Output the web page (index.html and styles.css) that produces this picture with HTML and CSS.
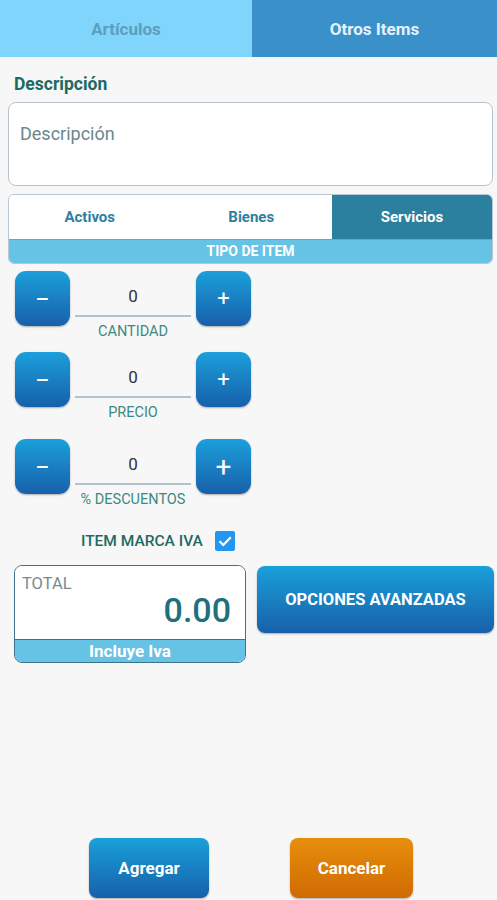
FILE: index.html
```html
<!DOCTYPE html>
<html lang="es">
<head>
    <meta charset="UTF-8">
    <meta name="viewport" content="width=device-width, initial-scale=1.0">
    <title>Otros Items</title>
    <link rel="stylesheet" href="styles.css">
</head>
<body>
    <div class="page">
        <div class="tabs">
            <div class="tab">Artículos</div>
            <div class="tab active">Otros Items</div>
        </div>

        <div class="label">Descripción</div>
        <div class="desc">Descripción</div>

        <div class="segment">
            <div class="options">
                <div class="option">Activos</div>
                <div class="option">Bienes</div>
                <div class="option selected">Servicios</div>
            </div>
            <div class="segment-title">TIPO DE ITEM</div>
        </div>

        <div class="stepper first">
            <div class="step-btn minus">&minus;</div>
            <div class="step-field">
                <div class="step-value">0</div>
                <div class="step-label">CANTIDAD</div>
            </div>
            <div class="step-btn">+</div>
        </div>

        <div class="stepper second">
            <div class="step-btn minus">&minus;</div>
            <div class="step-field">
                <div class="step-value">0</div>
                <div class="step-label">PRECIO</div>
            </div>
            <div class="step-btn">+</div>
        </div>

        <div class="stepper third">
            <div class="step-btn minus">&minus;</div>
            <div class="step-field">
                <div class="step-value">0</div>
                <div class="step-label">% DESCUENTOS</div>
            </div>
            <div class="step-btn big">+</div>
        </div>

        <div class="iva">
            <span>ITEM MARCA IVA</span>
            <span class="check">
                <svg width="20" height="20" viewBox="0 0 20 20">
                    <rect x="0" y="0" width="20" height="20" rx="2" fill="#2196f3"/>
                    <path d="M4.5 10.2 L8.3 14 L15.8 6.3" fill="none" stroke="#fff" stroke-width="2.2"/>
                </svg>
            </span>
        </div>

        <div class="summary">
            <div class="total">
                <div class="total-top">
                    <div class="total-label">TOTAL</div>
                    <div class="total-value">0.00</div>
                </div>
                <div class="total-note">Incluye Iva</div>
            </div>
            <div class="advanced">OPCIONES AVANZADAS</div>
        </div>

        <div class="footer">
            <div class="btn add">Agregar</div>
            <div class="btn cancel">Cancelar</div>
        </div>
    </div>
</body>
</html>
```

FILE: styles.css
```css
body {
    margin: 0;
    padding: 0;
    background-color: #f7f7f7;
    font-family: Roboto, "Liberation Sans", Arial, sans-serif;
}

.page {
    display: flex;
    flex-direction: column;
    height: 900px;
}

.tabs {
    display: flex;
    height: 57px;
}

.tab {
    flex: 0 0 252px;
    display: flex;
    align-items: center;
    justify-content: center;
    background-color: #80d5fd;
    color: #5d9ebd;
    font-size: 17px;
    font-weight: bold;
}

.tab.active {
    flex: 1;
    background-color: #3a90c9;
    color: #e6f2fb;
}

.label {
    margin: 17px 0 0 14px;
    height: 20px;
    line-height: 20px;
    color: #1b6b61;
    font-size: 17.5px;
    font-weight: bold;
}

.desc {
    margin: 8px 4px 0 8px;
    height: 84px;
    border: 1px solid #b9c3cb;
    border-radius: 8px;
    background-color: #fff;
    padding: 21px 0 0 11px;
    box-sizing: border-box;
    color: #6c878b;
    font-size: 18px;
    line-height: 20px;
}

.segment {
    margin: 8px 4px 0 8px;
    border: 1px solid #b6c9d3;
    border-radius: 6px;
    overflow: hidden;
}

.options {
    display: flex;
    height: 44px;
    background-color: #fff;
}

.option {
    flex: 1;
    display: flex;
    align-items: center;
    justify-content: center;
    color: #2f7e9e;
    font-size: 15px;
    font-weight: bold;
}

.option.selected {
    flex: 0 0 160px;
    background-color: #2b7f9f;
    color: #fff;
}

.segment-title {
    height: 23px;
    line-height: 23px;
    border-top: 1px solid #4faed3;
    background-color: #66c3e6;
    color: #fff;
    text-align: center;
    font-size: 14px;
    font-weight: bold;
}

.stepper {
    display: flex;
    align-items: flex-start;
    gap: 5px;
    padding-left: 15px;
}

.stepper.first {
    margin-top: 7px;
}

.stepper.second {
    margin-top: 12px;
}

.stepper.third {
    margin-top: 18px;
}

.step-btn {
    width: 55px;
    height: 55px;
    border-radius: 11px;
    background: linear-gradient(#1c9fdb, #1760aa);
    box-shadow: 0 1px 2px rgba(0, 0, 0, 0.3);
    color: #fff;
    display: flex;
    align-items: center;
    justify-content: center;
    font-size: 22px;
}

.step-btn.minus {
    font-size: 26px;
}

.step-btn.big {
    font-size: 28px;
}

.step-field {
    width: 116px;
    display: flex;
    flex-direction: column;
    align-items: center;
}

.step-value {
    width: 100%;
    height: 30px;
    padding-top: 14px;
    line-height: 22px;
    border-bottom: 2px solid #b3c3c9;
    text-align: center;
    color: #333;
    font-size: 17px;
}

.step-label {
    margin-top: 7px;
    line-height: 16px;
    color: #3b8a81;
    font-size: 14.5px;
}

.iva {
    margin-top: 23px;
    padding-left: 81px;
    height: 20px;
    display: flex;
    align-items: center;
    gap: 12px;
    color: #1f6b63;
    font-size: 15.5px;
    font-weight: 500;
}

.check {
    display: flex;
}

.summary {
    display: flex;
    align-items: flex-start;
    gap: 11px;
    margin-top: 14px;
    padding: 0 3px 0 14px;
}

.total {
    width: 232px;
    border: 1px solid #3e7289;
    border-radius: 8px;
    overflow: hidden;
    box-sizing: border-box;
}

.total-top {
    height: 73px;
    background-color: #fff;
    padding: 9px 14px 0 7px;
    box-sizing: border-box;
}

.total-label {
    line-height: 18px;
    color: #7a8a90;
    font-size: 16.5px;
}

.total-value {
    text-align: right;
    line-height: 34px;
    color: #1e6f80;
    font-size: 34px;
    font-weight: 500;
}

.total-note {
    height: 22px;
    line-height: 22px;
    border-top: 1px solid #3e7289;
    background-color: #66c3e6;
    color: #fff;
    text-align: center;
    font-size: 17px;
    font-weight: bold;
}

.advanced {
    flex: 1;
    height: 67px;
    margin-top: 1px;
    border-radius: 8px;
    background: linear-gradient(#1aa0da, #1860aa);
    box-shadow: 0 1px 2px rgba(0, 0, 0, 0.3);
    color: #fff;
    display: flex;
    align-items: center;
    justify-content: center;
    font-size: 16.5px;
    font-weight: bold;
}

.footer {
    margin-top: auto;
    display: flex;
    gap: 81px;
    padding: 0 0 2px 89px;
}

.btn {
    width: 120px;
    height: 60px;
    border-radius: 8px;
    color: #fff;
    display: flex;
    align-items: center;
    justify-content: center;
    font-size: 17px;
    font-weight: bold;
    box-shadow: 0 1px 2px rgba(0, 0, 0, 0.3);
}

.btn.add {
    background: linear-gradient(#1aa0da, #1760aa);
}

.btn.cancel {
    width: 123px;
    background: linear-gradient(#e68e0c, #d06a02);
}
```
